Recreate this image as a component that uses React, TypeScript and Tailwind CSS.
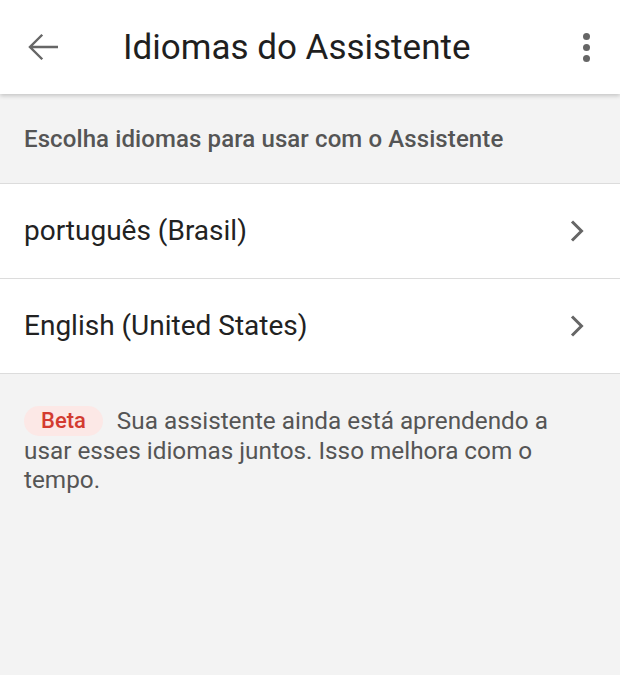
export default function App() {
  return (
    <div className="w-[620px] h-[675px] bg-[#f3f3f3] font-['Roboto',sans-serif] overflow-hidden">
      {/* App bar */}
      <div className="h-[94px] bg-white flex items-center shadow-[0_2px_4px_rgba(0,0,0,0.18)] relative z-10">
        <button className="w-[88px] h-full flex items-center justify-center text-[#666]">
          <svg width="42" height="42" viewBox="0 0 24 24" fill="none">
            <path d="M20 12H4M11 5l-7 7 7 7" stroke="currentColor" strokeWidth="1.4" />
          </svg>
        </button>
        <h1 className="flex-1 pl-[35px] text-[35px] text-[#1f1f1f] leading-none">Idiomas do Assistente</h1>
        <div className="w-[68px] h-full flex flex-col items-center justify-center gap-[4px]">
          <span className="w-[7px] h-[7px] rounded-full bg-[#666]" />
          <span className="w-[7px] h-[7px] rounded-full bg-[#666]" />
          <span className="w-[7px] h-[7px] rounded-full bg-[#666]" />
        </div>
      </div>

      {/* Section header */}
      <div className="h-[90px] flex items-center px-6 border-b border-[#dcdcdc]">
        <span className="text-[24px] font-medium text-[#555] tracking-[0.1px]">Escolha idiomas para usar com o Assistente</span>
      </div>

      {/* Language list */}
      <div className="bg-white">
        {["português (Brasil)", "English (United States)"].map((lang) => (
          <div key={lang} className="h-[95px] flex items-center justify-between pl-6 pr-[35px] border-b border-[#dcdcdc]">
            <span className="text-[28px] text-[#222]">{lang}</span>
            <svg width="16" height="24" viewBox="0 0 16 24" fill="none" className="text-[#666]">
              <path d="M3 2.5l9.5 9.5-9.5 9.5" stroke="currentColor" strokeWidth="3" />
            </svg>
          </div>
        ))}
      </div>

      {/* Beta note */}
      <div className="px-6 pt-[32px] text-[24.3px] leading-[29.5px] text-[#555]">
        <span className="inline-block align-middle bg-[#fce8e6] text-[#d33b30] font-medium text-[22px] leading-[30px] px-[17px] rounded-full mr-[14px] -mt-[4px]">Beta</span>
        Sua assistente ainda está aprendendo a usar esses idiomas juntos. Isso melhora com o tempo.
      </div>
    </div>
  );
}
